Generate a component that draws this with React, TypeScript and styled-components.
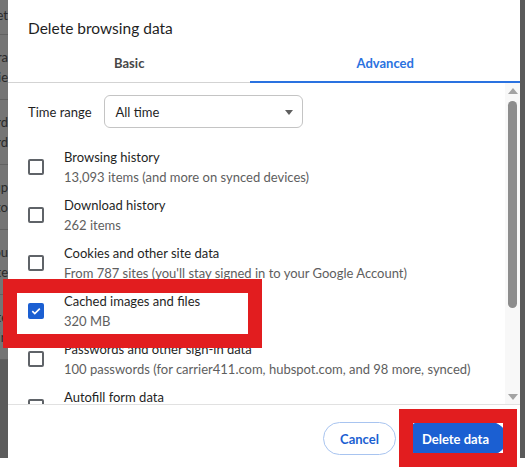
import React from "react";
import styled, { createGlobalStyle } from "styled-components";

const GlobalStyle = createGlobalStyle`
  html, body { margin: 0; padding: 0; background: #ffffff; }
  body { font-family: "Lato", "Noto Sans", sans-serif; -webkit-font-smoothing: antialiased; }
  * { box-sizing: border-box; }
`;

const FONT = `"Lato", "Noto Sans", sans-serif`;

const Screen = styled.div`
  position: relative;
  width: 525px;
  height: 468px;
  overflow: hidden;
  background: #ffffff;
`;

const Stage = styled.div`
  display: flex;
  height: 458px;
`;

const PeekLeft = styled.div`
  width: 8px;
  flex: none;
  display: flex;
  flex-direction: column;
  background: #5c5c5c;
  overflow: hidden;
`;

const PeekEntry = styled.div`
  height: 65px;
  flex: none;
  display: flex;
  flex-direction: column;
  justify-content: center;
  gap: 2px;
  background: #757575;
  border-bottom: 1px solid #626262;
  &:first-child { height: 35px; justify-content: flex-end; padding-bottom: 10px; }
`;

const PeekLine = styled.div`
  display: flex;
  justify-content: flex-end;
  white-space: nowrap;
  font-family: ${FONT};
  font-size: 13px;
  line-height: 18px;
  color: #2a2a2a;
`;

const PeekRight = styled.div`
  flex: 1;
  background: #5a5a5a;
`;

const Dialog = styled.div`
  width: 512px;
  flex: none;
  display: flex;
  flex-direction: column;
  background: #ffffff;
  border-radius: 8px 8px 0 0;
  overflow: hidden;
  font-family: ${FONT};
`;

const Title = styled.h1`
  margin: 0;
  height: 45px;
  padding: 17px 20px 0;
  font-size: 15.5px;
  font-weight: 400;
  line-height: 22px;
  color: #1f1f1f;
`;

const TabBar = styled.div`
  display: flex;
  height: 38px;
  border-bottom: 1px solid #d3d3d3;
`;

const Tab = styled.div<{ $active?: boolean }>`
  flex: 1 1 auto;
  display: flex;
  align-items: center;
  justify-content: center;
  font-size: 13px;
  font-weight: 700;
  margin-bottom: -1px;
  color: ${(p) => (p.$active ? "#2a72e0" : "#474747")};
  border-bottom: 2px solid ${(p) => (p.$active ? "#2a72e0" : "transparent")};
`;

const Body = styled.div`
  display: flex;
  height: 321px;
`;

const List = styled.div`
  flex: 1;
  overflow: hidden;
  padding: 12px 0 0 20px;
`;

const RangeRow = styled.div`
  display: flex;
  align-items: center;
  gap: 12px;
  margin-bottom: 15px;
`;

const Label = styled.span`
  font-size: 13px;
  color: #1f1f1f;
`;

const Select = styled.div`
  width: 199px;
  height: 33px;
  display: flex;
  align-items: center;
  justify-content: space-between;
  padding: 0 9px 0 11px;
  border: 1px solid #c4c4c4;
  border-radius: 6px;
  font-size: 13px;
  color: #1f1f1f;
`;

const Caret = styled.span`
  width: 0;
  height: 0;
  border-left: 4.5px solid transparent;
  border-right: 4.5px solid transparent;
  border-top: 5px solid #5f5f5f;
  margin-top: 1px;
`;

const Row = styled.div`
  display: flex;
  align-items: center;
  height: 48px;
  gap: 20px;
`;

const Box = styled.span<{ $checked?: boolean }>`
  width: 16px;
  height: 16px;
  flex: none;
  display: flex;
  align-items: center;
  justify-content: center;
  border-radius: 2px;
  border: ${(p) => (p.$checked ? "none" : "2px solid #5f6368")};
  background: ${(p) => (p.$checked ? "#1b5fd2" : "transparent")};
`;

const Texts = styled.div`
  display: flex;
  flex-direction: column;
`;

const RowTitle = styled.span`
  font-size: 13px;
  line-height: 20px;
  color: #1f1f1f;
  white-space: nowrap;
`;

const RowSub = styled.span`
  font-size: 13px;
  line-height: 21px;
  color: #5e5e5e;
  white-space: nowrap;
`;

const Scrollbar = styled.div`
  width: 15px;
  flex: none;
  display: flex;
  flex-direction: column;
  align-items: center;
  background: #f8f8f8;
  padding: 5px 0 4px;
`;

const Arrow = styled.span<{ $down?: boolean }>`
  width: 0;
  height: 0;
  border-left: 5px solid transparent;
  border-right: 5px solid transparent;
  ${(p) => (p.$down ? "border-top: 6px solid #a3a3a3;" : "border-bottom: 6px solid #a3a3a3;")}
`;

const Thumb = styled.span`
  width: 9px;
  height: 207px;
  margin-top: 7px;
  border-radius: 5px;
  background: #8d8d8d;
`;

const Spacer = styled.span`
  flex: 1;
`;

const Footer = styled.div`
  flex: 1;
  display: flex;
  align-items: flex-start;
  justify-content: flex-end;
  gap: 8px;
  padding: 17px 13px 0 0;
  border-top: 1px solid #e1e1e1;
`;

const Button = styled.button<{ $primary?: boolean }>`
  height: 33px;
  padding: 0;
  white-space: nowrap;
  border-radius: 17px;
  font-family: ${FONT};
  font-size: 13px;
  font-weight: 700;
  border: 1px solid ${(p) => (p.$primary ? "#1b5fd2" : "#a8c4f0")};
  background: ${(p) => (p.$primary ? "#1b5fd2" : "#ffffff")};
  color: ${(p) => (p.$primary ? "#ffffff" : "#1b5fd2")};
  width: ${(p) => (p.$primary ? "103px" : "73px")};
`;

const Mark = styled.span<{ $x: number; $y: number; $w: number; $h: number }>`
  position: absolute;
  left: ${(p) => p.$x}px;
  top: ${(p) => p.$y}px;
  width: ${(p) => p.$w}px;
  height: ${(p) => p.$h}px;
  border: 14px solid #e21d1f;
  pointer-events: none;
`;

const Check = () => (
  <svg width="12" height="12" viewBox="0 0 12 12">
    <path d="M2.3 6.2 L4.8 8.6 L9.8 3.6" fill="none" stroke="#fff" strokeWidth="1.6" />
  </svg>
);

const peek = [
  ["Set"],
  ["Extra", "Entrie"],
  ["Word", "Record"],
  ["Setup", "Into"],
  ["You", "Site"],
  ["Site", "Main"],
];

const items = [
  { title: "Browsing history", sub: "13,093 items (and more on synced devices)" },
  { title: "Download history", sub: "262 items" },
  { title: "Cookies and other site data", sub: "From 787 sites (you'll stay signed in to your Google Account)" },
  { title: "Cached images and files", sub: "320 MB", checked: true },
  { title: "Passwords and other sign-in data", sub: "100 passwords (for carrier411.com, hubspot.com, and 98 more, synced)" },
  { title: "Autofill form data", sub: "12 addresses, 240 other suggestions (synced)" },
];

export default function App() {
  return (
    <Screen>
      <GlobalStyle />
      <Stage>
        <PeekLeft>
          {peek.map((lines, i) => (
            <PeekEntry key={i}>
              {lines.map((l) => (
                <PeekLine key={l}>{l}</PeekLine>
              ))}
            </PeekEntry>
          ))}
        </PeekLeft>
        <Dialog>
          <Title>Delete browsing data</Title>
          <TabBar>
            <Tab>Basic</Tab>
            <Tab $active>Advanced</Tab>
          </TabBar>
          <Body>
            <List>
              <RangeRow>
                <Label>Time range</Label>
                <Select>
                  All time
                  <Caret />
                </Select>
              </RangeRow>
              {items.map((it) => (
                <Row key={it.title}>
                  <Box $checked={it.checked}>{it.checked && <Check />}</Box>
                  <Texts>
                    <RowTitle>{it.title}</RowTitle>
                    <RowSub>{it.sub}</RowSub>
                  </Texts>
                </Row>
              ))}
            </List>
            <Scrollbar>
              <Arrow />
              <Thumb />
              <Spacer />
              <Arrow $down />
            </Scrollbar>
          </Body>
          <Footer>
            <Button>Cancel</Button>
            <Button $primary>Delete data</Button>
          </Footer>
        </Dialog>
        <PeekRight />
      </Stage>
      <Mark $x={3} $y={279} $w={259} $h={69} />
      <Mark $x={399} $y={409} $w={118} $h={58} />
    </Screen>
  );
}
